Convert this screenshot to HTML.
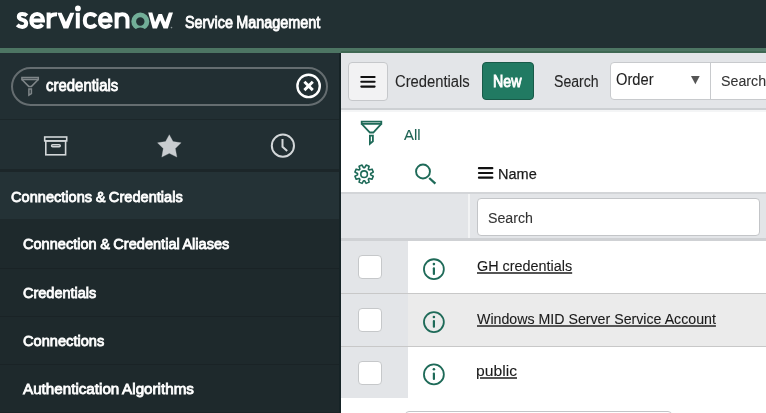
<!DOCTYPE html>
<html><head><meta charset="utf-8">
<style>
html,body{margin:0;padding:0;}
body{width:766px;height:413px;overflow:hidden;position:relative;background:#fff;font-family:"Liberation Sans",sans-serif;}
.a{position:absolute;box-sizing:border-box;}
.t{position:absolute;white-space:nowrap;transform-origin:0 0;font-family:"Liberation Sans",sans-serif;}
svg{position:absolute;overflow:visible;}
</style></head><body>
<!-- header -->
<div class="a" style="left:0;top:0;width:766px;height:48px;background:#223033;"></div>
<div class="a" style="left:0;top:48px;width:766px;height:5px;background:#4d7563;"></div>
<div class="a" style="left:341px;top:51px;width:425px;height:2px;background:#3f6853;"></div>
<!-- logo -->
<svg style="left:0;top:0" width="200" height="48" viewBox="0 0 200 48">
 <g fill="none" stroke="#fff" stroke-width="4" stroke-linecap="butt" stroke-linejoin="miter">
  <path d="M26.9 15.6 C25.6 14.3 24 13.9 22.3 13.9 C20 13.9 18.8 15 18.8 16.7 C18.8 18.6 20.6 19.3 22.6 19.9 C24.9 20.5 26.2 21.4 26.2 23.5 C26.2 25.6 24.6 26.9 22.3 26.9 C20.3 26.9 18.5 26.1 17.2 24.8"/>
  <path d="M31.1 20.6 H43 C43 16.7 40.4 13.9 37.1 13.9 C33.6 13.9 31.3 16.8 31.3 20.4 C31.3 24.1 33.7 26.9 37.2 26.9 C39.4 26.9 41.2 26 42.5 24.4"/>
  <path d="M48.6 28.4 V12.4 M48.6 19.8 C48.6 16.1 51.2 14.3 57 14.3"/>
  <path d="M77.8 12.8 V28.4"/>
  <path d="M95.9 16.4 C94.6 14.8 92.6 13.9 90.2 13.9 C86.6 13.9 84.8 16.8 84.8 20.4 C84.8 24 86.6 26.9 90.2 26.9 C92.6 26.9 94.6 26 95.9 24.4"/>
  <path d="M99.9 20.6 H110.6 C110.6 16.7 108.3 13.9 105.3 13.9 C102 13.9 99.9 16.8 99.9 20.4 C99.9 24.1 102.2 26.9 105.5 26.9 C107.6 26.9 109.3 26 110.5 24.4"/>
  <path d="M116.6 28.4 V12.5 M116.6 20.2 C116.6 16.2 119 14.2 122.3 14.2 C125.6 14.2 127.5 16.2 127.5 20 V28.4"/>
 </g>
 <path d="M57.3 12.8 H61.6 L65.9 22 L70.2 12.8 H74.3 L68.3 28.4 H63.5 Z" fill="#fff"/>
 <path d="M148.2 12.6 H152.3 L155.1 22.3 L158.5 14.1 H162 L165.3 22.3 L168.9 12.6 H173 L167.8 28.4 H163.5 L160.2 20.3 L157 28.4 H152.7 Z" fill="#fff"/>
 <circle cx="77.9" cy="8.45" r="2.9" fill="#fff"/>
 <mask id="om" maskUnits="userSpaceOnUse" x="120" y="0" width="40" height="48"><rect x="120" y="0" width="40" height="48" fill="#fff"/><ellipse cx="140.3" cy="33.2" rx="6.8" ry="5.6" fill="#000"/></mask>
 <circle cx="140.3" cy="21.5" r="6.6" fill="none" stroke="#72ae98" stroke-width="4.8" mask="url(#om)"/>
 <circle cx="171.5" cy="27.6" r="0.8" fill="#8a9597"/>
</svg>
<!-- sidebar -->
<div class="a" style="left:0;top:53px;width:341px;height:360px;background:#222f33;"></div>
<div class="a" style="left:11px;top:67px;width:317px;height:39px;border:2px solid #656d70;border-radius:19.5px;"></div>
<!-- filter icon sidebar -->
<svg style="left:0;top:0" width="60" height="110">
  <g fill="none" stroke="#7f8689" stroke-width="1.5" stroke-linejoin="miter">
  <path d="M21.9 77.6 H38.3 V79.5 H21.9 Z"/>
  <path d="M21.9 79.5 L28.7 86.4 H31.5 L38.3 79.5"/>
  <path d="M28.9 88.9 H31.4 V93.6 L28.9 95.1 Z"/>
  </g>
</svg>
<!-- clear icon -->
<svg style="left:0;top:0" width="340" height="110">
  <circle cx="308.6" cy="85.9" r="11.2" fill="none" stroke="#fff" stroke-width="2.4"/>
  <path d="M304.4 81.7 L312.8 90.1 M312.8 81.7 L304.4 90.1" stroke="#fff" stroke-width="2.9" stroke-linecap="butt"/>
</svg>
<div class="a" style="left:0;top:119px;width:340px;height:1px;background:#1c272a;"></div>
<!-- icons row -->
<svg style="left:0;top:0" width="340" height="170">
  <g fill="none" stroke="#d3d7d9" stroke-width="1.6">
  <rect x="44.7" y="137" width="22" height="3.9"/>
  <rect x="45.8" y="140.9" width="19.8" height="13.9"/>
  <rect x="51.6" y="144.7" width="8.6" height="2" rx="1"/>
  </g>
  <path d="M169.3 134.7 L173 141.6 L181.1 142.8 L175.3 148.6 L176.9 157.1 L169.3 153.3 L161.8 157.1 L163.3 148.6 L157.5 142.8 L165.6 141.6 Z" fill="#c9cdd0" stroke="#c9cdd0" stroke-width="0.3" stroke-linejoin="round"/>
  <circle cx="282.9" cy="145.7" r="11.1" fill="none" stroke="#d3d7d9" stroke-width="2"/>
  <path d="M282.5 138.9 V146.7 L287.2 150.9" fill="none" stroke="#d3d7d9" stroke-width="2"/>
</svg>
<div class="a" style="left:0;top:169px;width:340px;height:3px;background:#1c2629;"></div>
<div class="a" style="left:0;top:172px;width:340px;height:47px;background:#243236;"></div>
<!-- sub items -->
<div class="a" style="left:0;top:219px;width:340px;height:194px;background:#1e292c;"></div>
<div class="a" style="left:0;top:268px;width:340px;height:1px;background:#1a2326;"></div>
<div class="a" style="left:0;top:316px;width:340px;height:1px;background:#1a2326;"></div>
<div class="a" style="left:0;top:364px;width:340px;height:1px;background:#1a2326;"></div>
<div class="a" style="left:0;top:412px;width:340px;height:1px;background:#1a2326;"></div>

<div class="a" style="left:339px;top:53px;width:2px;height:360px;background:#162326;"></div>
<!-- main toolbar -->
<div class="a" style="left:341px;top:53px;width:425px;height:56px;background:#e3e5e8;"></div>
<div class="a" style="left:341px;top:108px;width:425px;height:2px;background:#cdd0d3;"></div>
<div class="a" style="left:341px;top:110px;width:425px;height:2px;background:#f4f5f6;"></div>
<div class="a" style="left:348px;top:62px;width:40px;height:39px;background:#f2f2f3;border:1.5px solid #c6c8cb;border-radius:4px;"></div>
<svg style="left:0;top:0" width="400" height="110"><g stroke="#111" stroke-width="2.1" stroke-linecap="round"><path d="M361.3 77 H374.6 M361.3 81.8 H374.6 M361.3 86.6 H374.6"/></g></svg>
<div class="a" style="left:482px;top:62px;width:52px;height:38px;background:#217a62;border:1px solid #185a48;border-radius:4px;"></div>
<div class="a" style="left:610px;top:62px;width:101px;height:38px;background:#fff;border:1px solid #c8cacd;border-radius:4px 0 0 4px;"></div>
<div class="a" style="left:710px;top:62px;width:60px;height:38px;background:#fff;border:1px solid #c8cacd;"></div>
<svg style="left:0;top:0" width="766" height="110">
  <path d="M691 76 H699.7 L695.35 84.2 Z" fill="#555"/>
</svg>

<!-- filter row -->
<svg style="left:0;top:0" width="766" height="413">
  <g fill="none" stroke="#1e6a58" stroke-width="1.8" stroke-linejoin="miter">
  <path d="M361.7 121.6 H381.3 V123.8 H361.7 Z"/>
  <path d="M361.7 123.8 L369.9 132.5 H373.3 L381.3 123.8"/>
  <path d="M369.9 135.6 H372.9 V141.3 L369.9 143.9 Z"/>
  </g>
  <g fill="none" stroke="#1e6a58" stroke-width="1.6" stroke-linejoin="round">
  <path d="M364.73 167.63 L366.13 165.02 L369.15 166.27 L368.30 169.11 L369.19 170.00 L372.03 169.15 L373.28 172.17 L370.67 173.57 L370.67 174.83 L373.28 176.23 L372.03 179.25 L369.19 178.40 L368.30 179.29 L369.15 182.13 L366.13 183.38 L364.73 180.77 L363.47 180.77 L362.07 183.38 L359.05 182.13 L359.90 179.29 L359.01 178.40 L356.17 179.25 L354.92 176.23 L357.53 174.83 L357.53 173.57 L354.92 172.17 L356.17 169.15 L359.01 170.00 L359.90 169.11 L359.05 166.27 L362.07 165.02 L363.47 167.63 Z"/>
  <circle cx="364.1" cy="174.2" r="3.3"/>
  </g>
  <circle cx="423" cy="171.5" r="6.95" fill="none" stroke="#1e6a58" stroke-width="1.9"/>
  <path d="M429.2 178 L435.4 183.7" stroke="#1e6a58" stroke-width="2.3"/>
<!-- name hamburger -->
  <rect x="477.9" y="167.1" width="15.5" height="2.2" rx="1" fill="#111"/>
  <rect x="477.9" y="171.9" width="15.5" height="2.2" rx="1" fill="#111"/>
  <rect x="477.9" y="176.6" width="15.5" height="2.2" rx="1" fill="#111"/>
</svg>
<div class="a" style="left:341px;top:192px;width:425px;height:2px;background:#d3d5d8;"></div>
<div class="a" style="left:341px;top:194px;width:425px;height:44px;background:#e3e5e8;"></div>
<div class="a" style="left:468px;top:194px;width:2px;height:44px;background:#f2f3f4;"></div>
<div class="a" style="left:477px;top:198px;width:283px;height:38px;background:#fff;border:1px solid #c3c5c8;border-radius:4px;"></div>
<div class="a" style="left:341px;top:238px;width:425px;height:3px;background:#cfd1d4;"></div>

<!-- rows -->
<div class="a" style="left:341px;top:241px;width:67px;height:157px;background:#e3e5e8;"></div>
<div class="a" style="left:408px;top:293px;width:358px;height:53px;background:#ebebeb;"></div>
<div class="a" style="left:341px;top:292.5px;width:425px;height:1px;background:#c8c8c8;"></div>
<div class="a" style="left:341px;top:346px;width:425px;height:1px;background:#c8c8c8;"></div>
<div class="a" style="left:358px;top:254.5px;width:24px;height:24px;background:#fff;border:1px solid #c6c8ca;border-radius:4px;"></div>
<div class="a" style="left:358px;top:307.5px;width:24px;height:24px;background:#fff;border:1px solid #c6c8ca;border-radius:4px;"></div>
<div class="a" style="left:358px;top:360.5px;width:24px;height:24px;background:#fff;border:1px solid #c6c8ca;border-radius:4px;"></div>
<svg style="left:0;top:0" width="766" height="413">
  <g fill="none" stroke="#1e6a58" stroke-width="1.8">
    <circle cx="433.9" cy="269.2" r="9.95"/>
    <circle cx="433.9" cy="322.1" r="9.95"/>
    <circle cx="433.9" cy="374.4" r="9.95"/>
  </g>
  <g fill="#1e6a58">
    <circle cx="433.9" cy="264.1" r="1.3"/><rect x="432.8" y="267.2" width="2.2" height="7.7" rx="1"/>
    <circle cx="433.9" cy="317" r="1.3"/><rect x="432.8" y="320.1" width="2.2" height="7.7" rx="1"/>
    <circle cx="433.9" cy="369.3" r="1.3"/><rect x="432.8" y="372.4" width="2.2" height="7.7" rx="1"/>
  </g>
</svg>
<div class="a" style="left:405px;top:411px;width:267px;height:10px;background:#fff;border:1px solid #c3c5c8;border-radius:4px;"></div>

<span class="t" style="left:185.00px;top:14.60px;font-size:16px;line-height:16px;font-weight:400;-webkit-text-stroke:0.85px #fff;color:#fff;transform:scaleX(0.8980);word-spacing:-0.6px;">Service Management</span>
<span class="t" style="left:46.20px;top:77.10px;font-size:17px;line-height:17px;font-weight:400;-webkit-text-stroke:0.85px #fff;color:#fff;transform:scaleX(0.8793);word-spacing:-0.6px;">credentials</span>
<span class="t" style="left:11.00px;top:188.80px;font-size:15.5px;line-height:15.5px;font-weight:400;-webkit-text-stroke:0.85px #fff;color:#fff;transform:scaleX(0.9418);word-spacing:-0.6px;">Connections &amp; Credentials</span>
<span class="t" style="left:23.00px;top:236.00px;font-size:15.5px;line-height:15.5px;font-weight:400;-webkit-text-stroke:0.85px #fff;color:#fff;transform:scaleX(0.9395);word-spacing:-0.6px;">Connection &amp; Credential Aliases</span>
<span class="t" style="left:23.00px;top:285.00px;font-size:15.5px;line-height:15.5px;font-weight:400;-webkit-text-stroke:0.85px #fff;color:#fff;transform:scaleX(0.9354);word-spacing:-0.6px;">Credentials</span>
<span class="t" style="left:23.00px;top:332.80px;font-size:15.5px;line-height:15.5px;font-weight:400;-webkit-text-stroke:0.85px #fff;color:#fff;transform:scaleX(0.9430);word-spacing:-0.6px;">Connections</span>
<span class="t" style="left:23.00px;top:381.00px;font-size:15.5px;line-height:15.5px;font-weight:400;-webkit-text-stroke:0.85px #fff;color:#fff;transform:scaleX(0.9805);word-spacing:-0.6px;">Authentication Algorithms</span>
<span class="t" style="left:395.38px;top:73.60px;font-size:16px;line-height:16px;font-weight:400;-webkit-text-stroke:0.1px #262626;color:#262626;transform:scaleX(0.9237);">Credentials</span>
<span class="t" style="left:492.61px;top:73.70px;font-size:16px;line-height:16px;font-weight:400;-webkit-text-stroke:0.85px #fff;color:#fff;transform:scaleX(0.8875);word-spacing:-0.6px;">New</span>
<span class="t" style="left:554.32px;top:73.70px;font-size:16px;line-height:16px;font-weight:400;-webkit-text-stroke:0.1px #262626;color:#262626;transform:scaleX(0.8796);">Search</span>
<span class="t" style="left:616.38px;top:72.10px;font-size:16px;line-height:16px;font-weight:400;-webkit-text-stroke:0.1px #222;color:#222;transform:scaleX(0.9175);">Order</span>
<span class="t" style="left:721.38px;top:72.80px;font-size:15.5px;line-height:15.5px;font-weight:400;-webkit-text-stroke:0.1px #333;color:#333;transform:scaleX(0.9170);">Search</span>
<span class="t" style="left:403.60px;top:127.10px;font-size:15px;line-height:15px;font-weight:400;-webkit-text-stroke:0.1px #1d6353;color:#1d6353;transform:scaleX(0.9937);">All</span>
<span class="t" style="left:498.35px;top:165.80px;font-size:15.3px;line-height:15.3px;font-weight:400;-webkit-text-stroke:0.25px #1a1a1a;color:#1a1a1a;transform:scaleX(0.9487);">Name</span>
<span class="t" style="left:488.17px;top:210.10px;font-size:15.3px;line-height:15.3px;font-weight:400;-webkit-text-stroke:0.1px #333;color:#333;transform:scaleX(0.9277);">Search</span>
<span class="t" style="left:476.80px;top:258.00px;font-size:15.3px;line-height:15.3px;font-weight:400;-webkit-text-stroke:0.1px #1a1a1a;color:#1a1a1a;transform:scaleX(0.9406);text-decoration:underline;text-decoration-color:#555;text-decoration-thickness:1.5px;">GH credentials</span>
<span class="t" style="left:476.80px;top:311.40px;font-size:15.3px;line-height:15.3px;font-weight:400;-webkit-text-stroke:0.1px #1a1a1a;color:#1a1a1a;transform:scaleX(0.9275);text-decoration:underline;text-decoration-color:#555;text-decoration-thickness:1.5px;">Windows MID Server Service Account</span>
<span class="t" style="left:475.77px;top:363.40px;font-size:15.3px;line-height:15.3px;font-weight:400;-webkit-text-stroke:0.1px #1a1a1a;color:#1a1a1a;transform:scaleX(1.0256);text-decoration:underline;text-decoration-color:#555;text-decoration-thickness:1.5px;">public</span>
</body></html>
